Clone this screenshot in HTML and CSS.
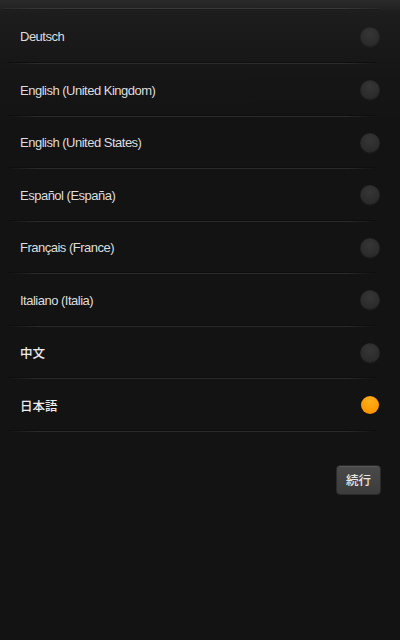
FILE: index.html
```html
<!DOCTYPE html>
<html lang="ja">
<head>
<meta charset="utf-8">
<link rel="stylesheet" href="styles.css">
</head>
<body>
<div class="screen">
  <div class="top-rule"></div>
  <ul class="lang-list">
    <li class="row first"><span class="label">Deutsch</span><span class="radio"></span></li>
    <li class="row"><span class="label">English (United Kingdom)</span><span class="radio"></span></li>
    <li class="row"><span class="label">English (United States)</span><span class="radio"></span></li>
    <li class="row"><span class="label">Español (España)</span><span class="radio"></span></li>
    <li class="row"><span class="label">Français (France)</span><span class="radio"></span></li>
    <li class="row"><span class="label">Italiano (Italia)</span><span class="radio"></span></li>
    <li class="row"><span class="label cjk">中文</span><span class="radio"></span></li>
    <li class="row"><span class="label cjk">日本語</span><span class="radio selected"></span></li>
  </ul>
  <div class="actions">
    <button class="continue">続行</button>
  </div>
</div>
</body>
</html>
```
FILE: styles.css
```css
html, body {
  margin: 0;
  padding: 0;
  height: 100%;
}
body {
  background: #131313;
  font-family: "Liberation Sans", Arial, "Noto Sans CJK JP", sans-serif;
  color: #e4e4e4;
}
.screen {
  height: 640px;
  background:
    linear-gradient(to bottom, #2a2a2a 0px, #232323 8px, #1d1d1d 12px, #161616 70px, #131313 130px, #131313 100%);
  padding-top: 8px;
  box-sizing: border-box;
}
.top-rule {
  height: 1px;
  margin: 0 20px 0 2px;
  background: linear-gradient(to right, rgba(60,60,60,0.3), #383838 10%, #3a3a3a 90%, rgba(60,60,60,0.2));
  box-shadow: 0 1px 0 #1a1a1a;
}
.lang-list {
  list-style: none;
  margin: 0;
  padding: 0;
}
.row {
  height: 52.5px;
  display: flex;
  align-items: center;
  justify-content: space-between;
  padding: 0 20px 0 20px;
  position: relative;
}
.row.first {
  height: 55px;
}
.row::after {
  content: "";
  position: absolute;
  left: 8px;
  right: 24px;
  bottom: 0;
  height: 1px;
  background: linear-gradient(to right, rgba(44,44,44,0), #2b2b2b 8%, #2b2b2b 92%, rgba(44,44,44,0));
  box-shadow: 0 -1px 0 #0e0e0e;
}
.label {
  font-size: 13px;
  letter-spacing: -0.5px;
  color: #dedede;
}
.label.cjk {
  font-family: "Noto Sans CJK JP", "Liberation Sans", sans-serif;
  font-size: 12.5px;
  letter-spacing: 0;
  font-weight: 500;
  color: #eeeeee;
}
.radio {
  width: 20px;
  height: 20px;
  border-radius: 50%;
  background: radial-gradient(circle at 50% 35%, #363636 0%, #2c2c2c 60%, #242424 100%);
  box-shadow: inset 0 0 1px rgba(0,0,0,0.6), 0 1px 0 rgba(255,255,255,0.03);
  flex: none;
}
.radio.selected {
  width: 18px;
  height: 18px;
  margin-right: 1px;
  background: radial-gradient(circle at 50% 30%, #ffb020 0%, #ff9c00 55%, #f08800 100%);
  box-shadow: 0 0 1px rgba(0,0,0,0.5);
}
.actions {
  display: flex;
  justify-content: flex-end;
  padding: 33px 19px 0 0;
}
.continue {
  width: 45px;
  height: 30px;
  border-radius: 4px;
  border: 1px solid #2a2a2a;
  background: linear-gradient(to bottom, #4a4a4a, #3c3c3c);
  box-shadow: inset 0 1px 0 rgba(255,255,255,0.08);
  color: #e6e6e6;
  font-family: "Noto Sans CJK JP", sans-serif;
  font-size: 12.5px;
  font-weight: 500;
  padding: 0;
  line-height: 28px;
}
```
